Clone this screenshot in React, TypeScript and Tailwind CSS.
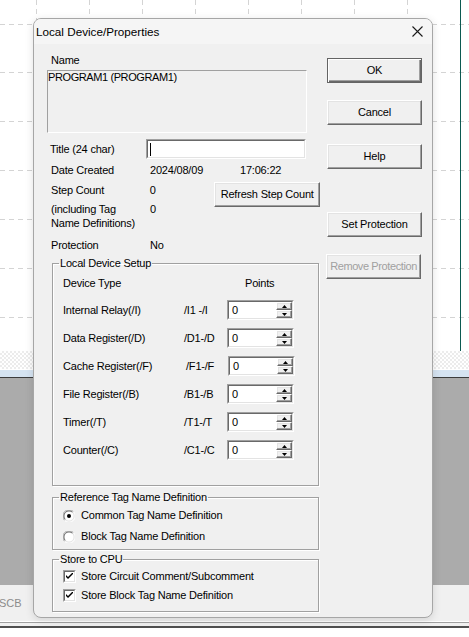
import React from "react";

const raised =
  "border border-t-white border-l-white border-r-[#696969] border-b-[#696969] shadow-[inset_-1px_-1px_0_#a0a0a0,inset_1px_1px_0_#e3e3e3]";

function Btn({
  children,
  className = "",
  def = false,
  disabled = false,
}: {
  children: React.ReactNode;
  className?: string;
  def?: boolean;
  disabled?: boolean;
}) {
  const base = def
    ? "border border-[#646464] shadow-[inset_1px_1px_0_#fff,inset_-1px_-1px_0_#696969,inset_-2px_-2px_0_#a0a0a0]"
    : raised;
  return (
    <div
      className={`flex h-[25px] items-center justify-center whitespace-nowrap bg-[#f0f0f0] leading-[13px] ${base} ${
        disabled ? "text-[#a0a0a0]" : "text-black"
      } ${className}`}
    >
      {children}
    </div>
  );
}

function Arrow({ up }: { up: boolean }) {
  return (
    <svg width="5" height="3" viewBox="0 0 5 3">
      {up ? <path d="M2.5 0 L5 3 L0 3 Z" fill="#000" /> : <path d="M0 0 L5 0 L2.5 3 Z" fill="#000" />}
    </svg>
  );
}

function Spin({ className = "" }: { className?: string }) {
  return (
    <div
      className={`h-[20px] w-[67px] border border-t-[#a0a0a0] border-l-[#a0a0a0] border-r-white border-b-white ${className}`}
    >
      <div className="flex h-full w-full border border-t-[#696969] border-l-[#696969] border-r-[#e3e3e3] border-b-[#e3e3e3] bg-white">
        <div className="flex flex-1 items-center pl-[3px] leading-[13px]">0</div>
        <div className="flex w-[16px] flex-col">
          <div className={`flex h-[8px] items-center justify-center bg-[#f0f0f0] ${raised}`}>
            <Arrow up />
          </div>
          <div className={`flex h-[8px] items-center justify-center bg-[#f0f0f0] ${raised}`}>
            <Arrow up={false} />
          </div>
        </div>
      </div>
    </div>
  );
}

function Radio({ checked }: { checked: boolean }) {
  return (
    <svg width="12" height="12" viewBox="0 0 12 12">
      <circle cx="6" cy="6" r="5.5" fill="#fff" />
      <path d="M1.6 10.4 A5.5 5.5 0 0 1 10.4 1.6" fill="none" stroke="#a0a0a0" strokeWidth="1" />
      <path d="M2.4 9.6 A4.4 4.4 0 0 1 9.6 2.4" fill="none" stroke="#696969" strokeWidth="1" />
      <path d="M10.4 1.6 A5.5 5.5 0 0 1 1.6 10.4" fill="none" stroke="#fff" strokeWidth="1" />
      <path d="M9.6 2.4 A4.4 4.4 0 0 1 2.4 9.6" fill="none" stroke="#e3e3e3" strokeWidth="1" />
      {checked && <circle cx="6" cy="6" r="2" fill="#000" />}
    </svg>
  );
}

function Check() {
  return (
    <div className="h-[13px] w-[13px] border border-t-[#a0a0a0] border-l-[#a0a0a0] border-r-white border-b-white">
      <div className="flex h-full w-full items-center justify-center border border-t-[#696969] border-l-[#696969] border-r-[#e3e3e3] border-b-[#e3e3e3] bg-white">
        <svg width="7" height="7" viewBox="0 0 7 7">
          <path d="M0 2 L0 4 L2 6 L7 1 L7 -1 L2 4 Z" fill="#000" />
        </svg>
      </div>
    </div>
  );
}

const rows: { label: string; range: string; shift?: boolean }[] = [
  { label: "Internal Relay(/I)", range: "/I1 -/I" },
  { label: "Data Register(/D)", range: "/D1-/D" },
  { label: "Cache Register(/F)", range: "/F1-/F", shift: true },
  { label: "File Register(/B)", range: "/B1-/B" },
  { label: "Timer(/T)", range: "/T1-/T" },
  { label: "Counter(/C)", range: "/C1-/C" },
];

function Grid() {
  const hs = [24.5, 72.5, 121.5, 170.5, 219.5, 268.5, 317.5];
  const vs = [36.5, 89.5, 142.5, 195.5, 248.5, 301.5, 354.5, 407.5];
  return (
    <svg width="469" height="351" className="block">
      {hs.map((y) => (
        <line key={"h" + y} x1="0" x2="469" y1={y} y2={y} stroke="#d4d4d4" strokeDasharray="5 4" />
      ))}
      {vs.map((x) => (
        <line key={"v" + x} x1={x} x2={x} y1="0" y2="351" stroke="#d4d4d4" strokeDasharray="5 4" />
      ))}
      <line x1="460.5" x2="460.5" y1="0" y2="351" stroke="#0b5a52" strokeWidth="1" />
    </svg>
  );
}

export default function App() {
  return (
    <div className="relative h-[637px] w-[469px] overflow-hidden bg-white font-['Liberation_Sans',Arial,sans-serif] text-[11px] text-black">
      {/* background application */}
      <div className="flex flex-col">
        <Grid />
        <div className="h-[18px] bg-[image:repeating-conic-gradient(#ececec_0%_25%,#ffffff_0%_50%)] bg-[length:4px_4px]" />
        <div className="h-[1px] bg-white" />
        <div className="h-[7px] bg-[#d5e3f1]" />
        <div className="h-[1px] bg-[#3c3c3c]" />
        <div className="h-[207px] bg-[#ababab]" />
        <div className="flex h-[36px] items-center bg-[#f0f0f0] text-[#8c8c8c]">
          <span className="ml-[-1px]">SCB</span>
        </div>
        <div className="h-[1px] bg-white" />
        <div className="h-[1px] bg-[#a0a0a0]" />
        <div className="h-[3px] bg-[#f0f0f0]" />
        <div className="h-[2px] bg-[#505050]" />
        <div className="flex-1 bg-[#dcdcdc]" />
      </div>

      {/* dialog */}
      <div className="absolute left-[33px] top-[18px] flex h-[600px] w-[400px] flex-col overflow-hidden rounded-[8px] border border-[#a6a6a6] bg-[#f0f0f0] shadow-[0_2px_8px_rgba(0,0,0,0.12)]">
        <div className="flex h-[25px] shrink-0 items-center justify-between bg-[#f5f5f5] pl-[2px]">
          <span className="text-[11.7px] leading-[14px]">Local Device/Properties</span>
          <svg width="11" height="11" viewBox="0 0 11 11" className="mr-[9px]">
            <path d="M0.5 0.5 L10.5 10.5 M10.5 0.5 L0.5 10.5" stroke="#1a1a1a" strokeWidth="1.1" />
          </svg>
        </div>
        <div className="flex flex-1 pl-[13px] pr-[9px] tracking-[-0.2px]">
          {/* left column */}
          <div className="flex w-[273px] flex-col">
            <div className="mt-[10px] pl-[4px] leading-[13px]">Name</div>
            <div className="mt-[3px] h-[63px] w-[260px] border border-t-[#a0a0a0] border-l-[#a0a0a0] border-r-white border-b-white leading-[13px] tracking-[-0.4px]">
              PROGRAM1 (PROGRAM1)
            </div>
            <div className="mt-[6px] flex h-[20px] items-center">
              <span className="w-[99px] pl-[3px]">Title (24 char)</span>
              <div className="h-[20px] w-[160px] border border-t-[#a0a0a0] border-l-[#a0a0a0] border-r-white border-b-white">
                <div className="flex h-full w-full items-center border border-t-[#696969] border-l-[#696969] border-r-[#e3e3e3] border-b-[#e3e3e3] bg-white pl-[2px]">
                  <div className="h-[13px] w-[1px] bg-black" />
                </div>
              </div>
            </div>
            <div className="mt-[1px] flex h-[20px] items-center leading-[13px]">
              <span className="w-[103px] pl-[4px]">Date Created</span>
              <span className="w-[90px]">2024/08/09</span>
              <span>17:06:22</span>
            </div>
            <div className="mt-[4px] flex h-[18px] items-start leading-[13px]">
              <span className="w-[103px] pl-[4px]">Step Count</span>
              <span className="w-[65px]">0</span>
              <Btn className="mt-[-2px] w-[106px]">Refresh Step Count</Btn>
            </div>
            <div className="flex leading-[14px]">
              <span className="w-[103px] pl-[4px]">
                (including Tag
                <br />
                Name Definitions)
              </span>
              <span>0</span>
            </div>
            <div className="mt-[8px] flex leading-[14px]">
              <span className="w-[103px] pl-[4px]">Protection</span>
              <span>No</span>
            </div>

            <fieldset className="ml-[5px] mt-[5px] w-[267px] border border-[#a0a0a0] shadow-[1px_1px_0_#fff,inset_1px_1px_0_#fff]">
              <legend className="ml-[6px] px-[1px] leading-[13px]">Local Device Setup</legend>
              <div className="mt-[7px] pb-[25px]">
                <div className="flex leading-[13px]">
                  <span className="w-[192px] pl-[10px]">Device Type</span>
                  <span>Points</span>
                </div>
                <div className="mt-[10px] flex flex-col gap-[8px]">
                  {rows.map((r) => (
                    <div key={r.label} className="flex h-[20px] items-center leading-[13px]">
                      <span className="w-[131px] pl-[10px]">{r.label}</span>
                      <span className={`w-[43px] ${r.shift ? "pl-[2px]" : ""}`}>{r.range}</span>
                      <Spin className={r.shift ? "ml-[1px]" : ""} />
                    </div>
                  ))}
                </div>
              </div>
            </fieldset>

            <fieldset className="ml-[5px] mt-[5px] w-[267px] border border-[#a0a0a0] shadow-[1px_1px_0_#fff,inset_1px_1px_0_#fff]">
              <legend className="ml-[6px] px-[1px] leading-[13px]">Reference Tag Name Definition</legend>
              <div className="mt-[5px] flex flex-col gap-[8px] pb-[6px] pl-[10px] leading-[13px]">
                <div className="flex h-[13px] items-center">
                  <Radio checked />
                  <span className="ml-[6px]">Common Tag Name Definition</span>
                </div>
                <div className="flex h-[13px] items-center">
                  <Radio checked={false} />
                  <span className="ml-[6px]">Block Tag Name Definition</span>
                </div>
              </div>
            </fieldset>

            <fieldset className="ml-[5px] mt-[3px] w-[267px] border border-[#a0a0a0] shadow-[1px_1px_0_#fff,inset_1px_1px_0_#fff]">
              <legend className="ml-[6px] px-[1px] leading-[13px]">Store to CPU</legend>
              <div className="mt-[4px] flex flex-col gap-[6px] pb-[9px] pl-[10px] leading-[13px]">
                <div className="flex h-[13px] items-center">
                  <Check />
                  <span className="ml-[5px]">Store Circuit Comment/Subcomment</span>
                </div>
                <div className="flex h-[13px] items-center">
                  <Check />
                  <span className="ml-[5px]">Store Block Tag Name Definition</span>
                </div>
              </div>
            </fieldset>
          </div>

          {/* right column */}
          <div className="ml-[7px] flex w-[95px] flex-col">
            <Btn def className="mt-[14px] w-[95px]">OK</Btn>
            <Btn className="mt-[17px] w-[95px]">Cancel</Btn>
            <Btn className="mt-[19px] w-[95px]">Help</Btn>
            <Btn className="mt-[43px] w-[95px]">Set Protection</Btn>
            <Btn disabled className="ml-[-1px] mt-[17px] w-[95px] tracking-[-0.4px]">Remove Protection</Btn>
          </div>
        </div>
      </div>
    </div>
  );
}
